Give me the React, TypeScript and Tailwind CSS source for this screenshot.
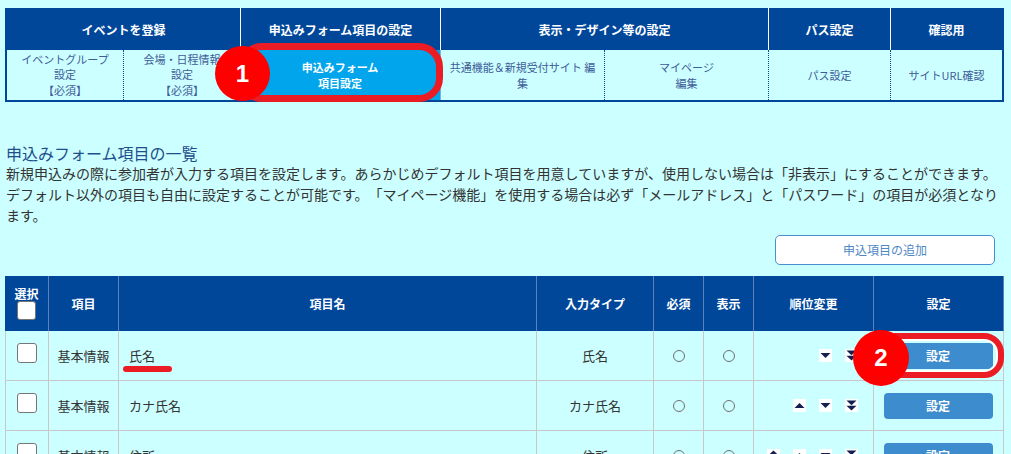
import React from 'react';

const NAVY = 'bg-[#00479a]';

type ArrowType = 'top' | 'up' | 'down' | 'bottom';

function Arrow({ type }: { type: ArrowType }) {
  const c = '#141f4f';
  return (
    <svg width="13" height="13" viewBox="0 0 13 13" className="block">
      <rect width="13" height="13" fill="#fff" />
      {type === 'up' && <path d="M1.5 9 L11.5 9 L6.5 4 Z" fill={c} />}
      {type === 'down' && <path d="M1.5 4 L11.5 4 L6.5 9 Z" fill={c} />}
      {type === 'bottom' && (
        <>
          <path d="M1.5 1.5 L11.5 1.5 L6.5 6.2 Z" fill={c} />
          <path d="M1.5 6.8 L11.5 6.8 L6.5 11.5 Z" fill={c} />
        </>
      )}
      {type === 'top' && (
        <>
          <path d="M1.5 6.2 L11.5 6.2 L6.5 1.5 Z" fill={c} />
          <path d="M1.5 11.5 L11.5 11.5 L6.5 6.8 Z" fill={c} />
        </>
      )}
    </svg>
  );
}

function Checkbox({ size = 20 }: { size?: number }) {
  return (
    <div
      className={`${size === 20 ? 'w-[20px] h-[20px]' : 'w-[19px] h-[19px]'} bg-white border border-[#767676] rounded-[3px]`}
    />
  );
}

const rows: { cat: string; name: string; type: string; arrows: ArrowType[] }[] = [
  { cat: '基本情報', name: '氏名', type: '氏名', arrows: ['down', 'bottom'] },
  { cat: '基本情報', name: 'カナ氏名', type: 'カナ氏名', arrows: ['up', 'down', 'bottom'] },
  { cat: '基本情報', name: '住所', type: '住所', arrows: ['top', 'up', 'down', 'bottom'] },
];

const gridCols = 'grid grid-cols-[44px_70px_418px_117px_50px_50px_120px_130px]';

export default function App() {
  return (
    <div className="relative w-[1011px] h-[454px] overflow-hidden bg-[#ccffff] font-['Noto_Sans_CJK_JP',sans-serif] [text-spacing-trim:space-all]">
      <div className="pt-[8px] pl-[5px]">
        {/* Nav */}
        <div className="w-[999px] border-x-2 border-b-2 border-[#00479a]">
          <div className="grid grid-cols-[116px_117px_200px_164px_164px_122px_112px]">
            <div className={`col-span-2 h-[42px] ${NAVY} text-white text-[12px] font-bold flex items-center justify-center pt-[2px]`}>
              イベントを登録
            </div>
            <div className={`h-[42px] ${NAVY} border-l border-white text-white text-[12px] font-bold flex items-center justify-center pt-[2px]`}>
              申込みフォーム項目の設定
            </div>
            <div className={`col-span-2 h-[42px] ${NAVY} border-l border-white text-white text-[12px] font-bold flex items-center justify-center pt-[2px]`}>
              表示・デザイン等の設定
            </div>
            <div className={`h-[42px] ${NAVY} border-l border-white text-white text-[12px] font-bold flex items-center justify-center pt-[2px]`}>
              パス設定
            </div>
            <div className={`h-[42px] ${NAVY} border-l border-white text-white text-[12px] font-bold flex items-center justify-center pt-[2px]`}>
              確認用
            </div>

            <div className="h-[50px] flex items-center justify-center text-center text-[11px] leading-[15.5px] text-[#3f5b98] px-[5px]">
              <span>
                イベントグループ
                <br />
                設定
                <br />
                【必須】
              </span>
            </div>
            <div className="h-[50px] border-l border-dotted border-[#00479a] flex items-center justify-center text-center text-[11px] leading-[15.5px] text-[#3f5b98] px-[5px]">
              <span>
                会場・日程情報
                <br />
                設定
                <br />
                【必須】
              </span>
            </div>
            <div className="h-[50px] bg-[#00a5ec] flex items-center justify-center text-center text-[11px] leading-[16.5px] text-white font-bold px-[5px]">
              <span>
                申込みフォーム
                <br />
                項目設定
              </span>
            </div>
            <div className="h-[50px] border-l border-[#7fb0d8] flex items-center justify-center text-center text-[11px] leading-[16px] text-[#3f5b98] px-[5px]">
              <span>共通機能＆新規受付サイト 編集</span>
            </div>
            <div className="h-[50px] border-l border-dotted border-[#00479a] flex items-center justify-center text-center text-[11px] leading-[16px] text-[#3f5b98] px-[5px]">
              <span>
                マイページ
                <br />
                編集
              </span>
            </div>
            <div className="h-[50px] border-l border-dotted border-[#00479a] flex items-center justify-center text-center text-[11px] text-[#3f5b98] px-[5px]">
              パス設定
            </div>
            <div className="h-[50px] border-l border-dotted border-[#00479a] flex items-center justify-center text-center text-[11px] text-[#3f5b98] px-[5px]">
              サイトURL確認
            </div>
          </div>
        </div>

        {/* Description */}
        <div className="w-[999px] mt-[41px] pl-[1px]">
          <h2 className="text-[16px] leading-[20px] text-[#1f4e8c] font-normal">申込みフォーム項目の一覧</h2>
          <p className="text-[14px] leading-[21px] text-[#333333]">
            新規申込みの際に参加者が入力する項目を設定します。あらかじめデフォルト項目を用意していますが、使用しない場合は「非表示」にすることができます。デフォルト以外の項目も自由に設定することが可能です。「マイページ機能」を使用する場合は必ず「メールアドレス」と「パスワード」の項目が必須となります。
          </p>
        </div>

        {/* Add button */}
        <div className="w-[999px] flex justify-end mt-[9px] pr-[9px]">
          <button className="w-[220px] h-[30px] bg-white border border-[#4a90d0] rounded-[5px] text-[12px] text-[#4f87c6] flex items-center justify-center">
            申込項目の追加
          </button>
        </div>

        {/* Table */}
        <div className="w-[999px] mt-[11px]">
          <div className={`${gridCols} h-[55px] ${NAVY} text-white text-[12px] font-bold`}>
            <div className="flex flex-col items-center justify-center border-r border-[#5f7fb5] pb-[2px]">
              <span className="leading-[15px]">選択</span>
              <Checkbox size={19} />
            </div>
            <div className="flex items-center justify-center border-r border-[#5f7fb5]">項目</div>
            <div className="flex items-center justify-center border-r border-[#5f7fb5]">項目名</div>
            <div className="flex items-center justify-center border-r border-[#5f7fb5]">入力タイプ</div>
            <div className="flex items-center justify-center border-r border-[#5f7fb5]">必須</div>
            <div className="flex items-center justify-center border-r border-[#5f7fb5]">表示</div>
            <div className="flex items-center justify-center border-r border-[#5f7fb5]">順位変更</div>
            <div className="flex items-center justify-center border-r border-[#5f7fb5]">設定</div>
          </div>
          {rows.map((r, i) => (
            <div key={i} className={`${gridCols} h-[50px] border-b border-[#c8c8c8] text-[13px] text-[#333333]`}>
              <div className="flex items-center justify-center border-x border-[#c8c8c8] pb-[5px]">
                <Checkbox />
              </div>
              <div className="flex items-center justify-center border-r border-[#c8c8c8]">{r.cat}</div>
              <div className="flex items-center pl-[10px] border-r border-[#c8c8c8]">{r.name}</div>
              <div className="flex items-center justify-center border-r border-[#c8c8c8]">{r.type}</div>
              <div className="flex items-center justify-center border-r border-[#c8c8c8]">
                <div className="w-[12px] h-[12px] rounded-full border border-[#6e6e6e]" />
              </div>
              <div className="flex items-center justify-center border-r border-[#c8c8c8]">
                <div className="w-[12px] h-[12px] rounded-full border border-[#6e6e6e]" />
              </div>
              <div className="flex items-center justify-end gap-[13px] pr-[15px] border-r border-[#c8c8c8]">
                {r.arrows.map((a, j) => (
                  <Arrow key={j} type={a} />
                ))}
              </div>
              <div className="flex items-center justify-center border-r border-[#c8c8c8] pr-[1px]">
                <button className="w-[109px] h-[26px] bg-[#3d8ccd] rounded-[4px] text-white text-[12px] font-bold">
                  設定
                </button>
              </div>
            </div>
          ))}
        </div>
      </div>

      {/* Annotations */}
      <div className="absolute left-[238px] top-[43px] w-[205px] h-[59px] border-[7px] border-[#ec1c24] rounded-[24px]" />
      <div className="absolute left-[215px] top-[46px] w-[55px] h-[55px] rounded-full bg-[#ff0000] flex items-center justify-center text-white text-[24px] font-bold font-['Liberation_Sans',Arial,sans-serif]">
        1
      </div>
      <div className="absolute left-[123px] top-[366px] w-[49px] h-[6px] rounded-full bg-[#ec1c24]" />
      <div className="absolute left-[875px] top-[333px] w-[129px] h-[45px] border-[6px] border-[#ec1c24] rounded-[20px] shadow-[inset_0_0_0_2px_#ffffff]" />
      <div className="absolute left-[853px] top-[330px] w-[56px] h-[56px] rounded-full bg-[#ff0000] flex items-center justify-center text-white text-[24px] font-bold font-['Liberation_Sans',Arial,sans-serif]">
        2
      </div>
    </div>
  );
}
